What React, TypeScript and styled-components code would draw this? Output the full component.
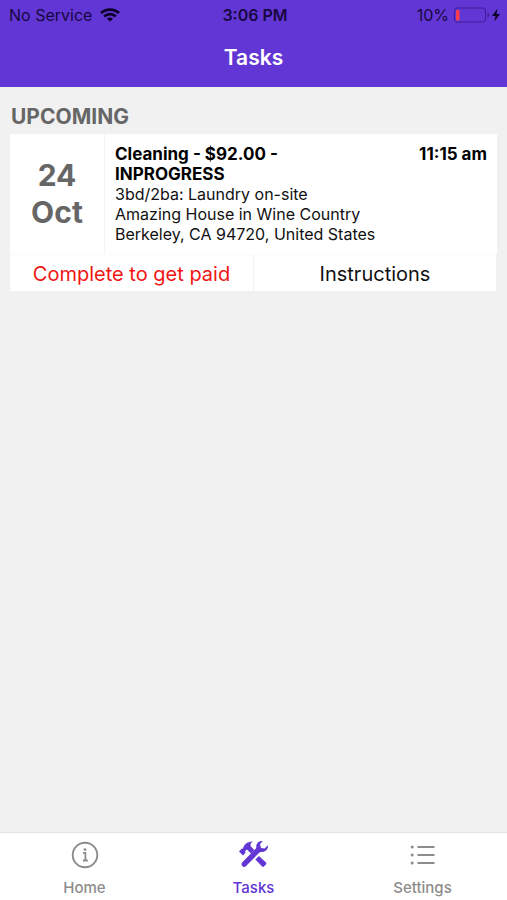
import React from 'react';
import styled, { createGlobalStyle } from 'styled-components';

const GlobalStyle = createGlobalStyle`
  * { box-sizing: border-box; }
  body { margin: 0; background: #f1f1f1; font-family: Inter, 'Liberation Sans', sans-serif; color: #111; }
  button { font: inherit; border: 0; background: none; padding: 0; cursor: pointer; }
  h1, h2, p { margin: 0; }
`;

const Screen = styled.div`
  min-height: 100vh;
  display: flex;
  flex-direction: column;
`;

const Header = styled.header`
  background: #6236d4;
`;

const StatusBar = styled.div`
  display: grid;
  grid-template-columns: 1fr auto 1fr;
  align-items: center;
  height: 30px;
  padding: 0 6px 0 9px;
  font-size: 16px;
  color: #170740;
`;

const StatusGroup = styled.div<{ $end?: boolean }>`
  display: flex;
  align-items: center;
  gap: ${(p) => (p.$end ? 4 : 8)}px;
  justify-content: ${(p) => (p.$end ? 'flex-end' : 'flex-start')};
`;

const Clock = styled.span`
  font-weight: 600;
`;

const Title = styled.h1`
  height: 57px;
  padding-top: 14px;
  font-size: 21px;
  line-height: 28px;
  font-weight: 600;
  text-align: center;
  color: #fff;
`;

const Main = styled.main`
  flex: 1;
  padding: 16px 10px;
`;

const SectionTitle = styled.h2`
  margin-bottom: 4px;
  padding-left: 1px;
  font-size: 21px;
  line-height: 27px;
  font-weight: 700;
  color: #666;
`;

const CardBody = styled.div`
  display: grid;
  grid-template-columns: 95px 1fr;
  min-height: 120px;
  background: #fff;
`;

const DateBox = styled.time`
  display: flex;
  flex-direction: column;
  justify-content: center;
  text-align: center;
  font-size: 30px;
  line-height: 37px;
  font-weight: 700;
  color: #666;
  border-right: 1px solid #f4f4f4;
`;

const Details = styled.div`
  padding: 10px;
  font-size: 16px;
  line-height: 20px;
`;

const DetailsHead = styled.div`
  display: flex;
  justify-content: space-between;
  font-size: 17px;
  font-weight: 700;
  color: #000;
`;

const TaskName = styled.p`
  max-width: 190px;
`;

const Actions = styled.div`
  display: grid;
  grid-template-columns: 1fr 1fr;
  margin-right: 1px;
  background: #fff;
  border-top: 1px solid #f9f9f9;
`;

const Action = styled.button<{ $alert?: boolean }>`
  && {
    height: 36px;
    padding-top: 1px;
    font-size: 20px;
    color: ${(p) => (p.$alert ? '#f01414' : '#111')};
    border-left: ${(p) => (p.$alert ? 0 : 1)}px solid #f2f2f2;
  }
`;

const TabBar = styled.nav`
  display: grid;
  grid-template-columns: repeat(3, 1fr);
  height: 68px;
  background: #fff;
  border-top: 1px solid #e2e2e2;
`;

const Tab = styled.button<{ $active?: boolean }>`
  && {
    display: flex;
    flex-direction: column;
    align-items: center;
    gap: 9px;
    padding-top: 7px;
    font-size: 15px;
    line-height: 18px;
    font-weight: 500;
    color: ${(p) => (p.$active ? '#6236d4' : '#8c8c8c')};
  }
`;

const WifiIcon = () => (
  <svg width="20" height="14" viewBox="0 0 20 14" role="img" aria-label="Wi-Fi" fill="none" stroke="#0b0128" strokeWidth="2.8">
    <path d="M1 5.1C6 .4 14 .4 19 5.1M4.2 8.4C7.4 5.4 12.600 5.4 15.8 8.4" />
    <path d="M10 13.6 7 10.7C8.7 9.200 11.3 9.200 13 10.7Z" fill="#0b0128" stroke="none" />
  </svg>
);

const BatteryIcon = () => (
  <svg width="48" height="18" viewBox="0 0 48 18" role="img" aria-label="Battery charging">
    <rect x="1.5" y="2" width="31" height="14" rx="3" fill="none" stroke="#3f1c9c" />
    <rect x="3" y="4" width="3.5" height="10.5" rx="1" fill="#fb3d4c" />
    <path d="M34.5 6.5C36.5 7 36.5 11 34.5 11.5Z" fill="#3f1c9c" />
    <path d="M44.5 2.5 39 10H42.5L41.3 15.5 47 8H43.500Z" fill="#0b0128" />
  </svg>
);

const InfoIcon = () => (
  <svg width="30" height="30" viewBox="0 0 30 30" aria-hidden="true" fill="none" stroke="currentColor">
    <circle cx="15" cy="15" r="12.3" strokeWidth="1.9" />
    <path d="M13 12.800H15.400V20.500M13 20.500H17.800" strokeWidth="1.8" />
    <circle cx="15" cy="9.6" r="1.4" fill="currentColor" stroke="none" />
  </svg>
);

const ToolsIcon = () => (
  <svg width="30" height="30" viewBox="0 0 30 30" aria-hidden="true" fill="currentColor">
    <path d="M0 11.600 2.800 8.400 4 8.800C4.600 5.200 8 1.300 14 1.600 11.600 2.900 11.200 4.400 11.700 6.200L15.300 10 11.800 13.400 8.300 9.800C7.300 9.700 6.500 10.400 6.200 11.600L6.500 12.700 4 15.400Z" />
    <path d="M20 16 27 22.600Q27.800 23.400 27 24.300L24.900 26.500Q24 27.400 23.100 26.500L16.300 19.500Z" />
    <path d="M23.600 1.100C20.600.500 17.100 3 17.300 6.700Q17.400 8 16.900 8.600L3.300 22.300C2.200 23.500 2.300 25 3.300 26.100 4.400 27.200 6 27.300 7.100 26.100L20.400 12.500Q21.300 11.900 22.400 12C26.300 12.200 29.500 9.200 28.900 5.300L25.600 8.500 22 7.900 21 4.300Z" />
  </svg>
);

const ListIcon = () => (
  <svg width="30" height="30" viewBox="0 0 30 30" aria-hidden="true" fill="none" stroke="currentColor" strokeWidth="2">
    <path d="M9.5 7H26.500M9.5 15H26.500M9.5 23H26.500" />
    <path d="M4.200 7H4.210M4.200 15H4.210M4.200 23H4.210" strokeWidth="3" strokeLinecap="round" />
  </svg>
);

export default function App() {
  return (
    <Screen>
      <GlobalStyle />
      <Header>
        <StatusBar>
          <StatusGroup>
            No Service
            <WifiIcon />
          </StatusGroup>
          <Clock>3:06 PM</Clock>
          <StatusGroup $end>
            10%
            <BatteryIcon />
          </StatusGroup>
        </StatusBar>
        <Title>Tasks</Title>
      </Header>
      <Main>
        <SectionTitle>UPCOMING</SectionTitle>
        <article>
          <CardBody>
            <DateBox dateTime="10-24">
              <span>24</span>
              <span>Oct</span>
            </DateBox>
            <Details>
              <DetailsHead>
                <TaskName>Cleaning - $92.00 - INPROGRESS</TaskName>
                <span>11:15 am</span>
              </DetailsHead>
              <p>3bd/2ba: Laundry on-site</p>
              <p>Amazing House in Wine Country</p>
              <p>Berkeley, CA 94720, United States</p>
            </Details>
          </CardBody>
          <Actions>
            <Action type="button" $alert>Complete to get paid</Action>
            <Action type="button">Instructions</Action>
          </Actions>
        </article>
      </Main>
      <TabBar>
        <Tab type="button">
          <InfoIcon />
          Home
        </Tab>
        <Tab type="button" $active aria-current="page">
          <ToolsIcon />
          Tasks
        </Tab>
        <Tab type="button">
          <ListIcon />
          Settings
        </Tab>
      </TabBar>
    </Screen>
  );
}
